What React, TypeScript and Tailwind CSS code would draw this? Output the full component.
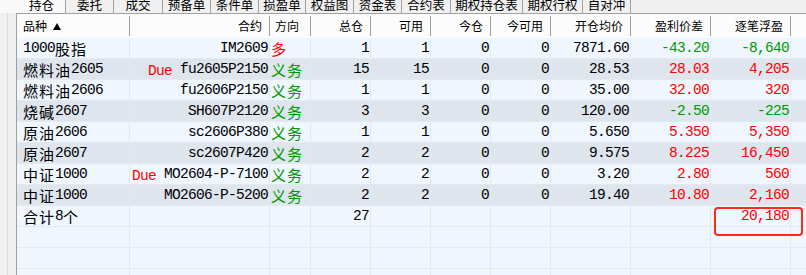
import React from "react";

const cjkRe = /([\u2E80-\u9FFF\uFF00-\uFFEF]+)/;

function T({ s }: { s: string }) {
  const parts = s.split(cjkRe).filter((p) => p.length > 0);
  return (
    <>
      {parts.map((p, i) =>
        cjkRe.test(p) ? (
          <span key={i} className="font-['Noto_Sans_CJK_SC',sans-serif] text-[15px] tracking-[1px]">
            {p}
          </span>
        ) : (
          <span key={i} className="font-['Liberation_Mono',monospace] text-[14.5px] tracking-[-0.7px] whitespace-pre">
            {p}
          </span>
        )
      )}
    </>
  );
}

const tabs: { label: string; w: string }[] = [
  { label: "持仓", w: "w-[66px] pl-[18px] bg-[#f9f9f9]" },
  { label: "委托", w: "w-[48px]" },
  { label: "成交", w: "w-[49px]" },
  { label: "预备单", w: "w-[48px]" },
  { label: "条件单", w: "w-[48px]" },
  { label: "损盈单", w: "w-[47px]" },
  { label: "权益图", w: "w-[48px]" },
  { label: "资金表", w: "w-[48px]" },
  { label: "合约表", w: "w-[49px]" },
  { label: "期权持仓表", w: "w-[72px]" },
  { label: "期权行权", w: "w-[60px]" },
  { label: "自对冲", w: "w-[48px]" },
];

const colW = [
  "w-[113px]",
  "w-[140px]",
  "w-[41px]",
  "w-[60px]",
  "w-[60px]",
  "w-[60px]",
  "w-[60px]",
  "w-[80px]",
  "w-[80px]",
  "w-[80px]",
];

const headers = ["品种", "合约", "方向", "总仓", "可用", "今仓", "今可用", "开仓均价", "盈利价差", "逐笔浮盈"];

type Row = {
  name: string;
  due?: boolean;
  code: string;
  dir: string;
  dirRed?: boolean;
  total: string;
  avail: string;
  today: string;
  todayAvail: string;
  price: string;
  diff: string;
  pnl: string;
  up: boolean;
};

const rows: Row[] = [
  { name: "1000股指", code: "IM2609", dir: "多", dirRed: true, total: "1", avail: "1", today: "0", todayAvail: "0", price: "7871.60", diff: "-43.20", pnl: "-8,640", up: false },
  { name: "燃料油2605", due: true, code: "fu2605P2150", dir: "义务", total: "15", avail: "15", today: "0", todayAvail: "0", price: "28.53", diff: "28.03", pnl: "4,205", up: true },
  { name: "燃料油2606", code: "fu2606P2150", dir: "义务", total: "1", avail: "1", today: "0", todayAvail: "0", price: "35.00", diff: "32.00", pnl: "320", up: true },
  { name: "烧碱2607", code: "SH607P2120", dir: "义务", total: "3", avail: "3", today: "0", todayAvail: "0", price: "120.00", diff: "-2.50", pnl: "-225", up: false },
  { name: "原油2606", code: "sc2606P380", dir: "义务", total: "1", avail: "1", today: "0", todayAvail: "0", price: "5.650", diff: "5.350", pnl: "5,350", up: true },
  { name: "原油2607", code: "sc2607P420", dir: "义务", total: "2", avail: "2", today: "0", todayAvail: "0", price: "9.575", diff: "8.225", pnl: "16,450", up: true },
  { name: "中证1000", due: true, code: "MO2604-P-7100", dir: "义务", total: "2", avail: "2", today: "0", todayAvail: "0", price: "3.20", diff: "2.80", pnl: "560", up: true },
  { name: "中证1000", code: "MO2606-P-5200", dir: "义务", total: "2", avail: "2", today: "0", todayAvail: "0", price: "19.40", diff: "10.80", pnl: "2,160", up: true },
];

const cellR = "flex items-center justify-end pr-[1px] pt-[2px] border-r border-[#e4e9ef] whitespace-pre";
const cellL = "flex items-center pt-[2px] border-r border-[#e4e9ef] whitespace-pre";

function DataRow({ r, dark }: { r: Row; dark: boolean }) {
  const bg = dark ? "bg-[#dee5ec]" : "bg-[#eff6fd]";
  const clr = r.up ? "text-[#ff0000]" : "text-[#009900]";
  return (
    <div className={`flex h-[21px] border-b border-[#e4e9ef] text-black ${bg}`}>
      <div className={`${colW[0]} ${cellL} pl-[6px]`}>
        <T s={r.name} />
      </div>
      <div className={`${colW[1]} ${cellR}`}>
        {r.due && (
          <span className="text-[#ff0000]">
            <T s="Due" />
          </span>
        )}
        <T s={(r.due ? " " : "") + r.code} />
      </div>
      <div className={`${colW[2]} ${cellL} pl-[1px] ${r.dirRed ? "text-[#ff0000]" : "text-[#009900]"}`}>
        <T s={r.dir} />
      </div>
      <div className={`${colW[3]} ${cellR}`}>
        <T s={r.total} />
      </div>
      <div className={`${colW[4]} ${cellR}`}>
        <T s={r.avail} />
      </div>
      <div className={`${colW[5]} ${cellR}`}>
        <T s={r.today} />
      </div>
      <div className={`${colW[6]} ${cellR}`}>
        <T s={r.todayAvail} />
      </div>
      <div className={`${colW[7]} ${cellR}`}>
        <T s={r.price} />
      </div>
      <div className={`${colW[8]} ${cellR} ${clr}`}>
        <T s={r.diff} />
      </div>
      <div className={`${colW[9]} ${cellR} ${clr}`}>
        <T s={r.pnl} />
      </div>
      <div className="flex-1" />
    </div>
  );
}

function EmptyRow({ children }: { children?: React.ReactNode }) {
  return <div className="flex h-[21px] border-b border-[#e4e9ef] bg-[#eff6fd]">{children}</div>;
}

export default function App() {
  return (
    <div className="relative w-[806px] h-[275px] overflow-hidden bg-[#f0f0f0] text-black">
      {/* tab bar */}
      <div className="flex h-[13px] font-['Noto_Sans_CJK_SC',sans-serif] text-[12.5px] leading-[12px]">
        {tabs.map((t) => (
          <div
            key={t.label}
            className={`${t.w} h-[13px] flex items-end justify-center pb-[2px] border-r border-[#a0a0a0]`}
          >
            <span>{t.label}</span>
          </div>
        ))}
      </div>

      <div className="flex">
        {/* gutter */}
        <div className="w-[16px] h-[262px] flex">
          <div className="w-[8px] border-r border-[#dadada]" />
        </div>

        {/* grid */}
        <div className="flex-1 border-l border-t border-[#a0a0a0] h-[262px] overflow-hidden">
          {/* header */}
          <div className="flex h-[24px] bg-[#fcfcfc] font-['Noto_Sans_CJK_SC',sans-serif] text-[12px] leading-[14px]">
            {headers.map((h, i) => (
              <div key={h} className={`${colW[i]} flex items-center`}>
                <div
                  className={`flex-1 flex items-center ${
                    i === 0 ? "pl-[6px]" : i === 2 ? "pl-[5px]" : "justify-end pr-[7px]"
                  }`}
                >
                  <span>{h}</span>
                  {i === 0 && (
                    <svg width="8" height="7" viewBox="0 0 8 7" className="ml-[6px]">
                      <path d="M4 0 L8 7 L0 7 Z" fill="#000" />
                    </svg>
                  )}
                </div>
                <div className="w-px h-[20px] bg-[#a0a0a0]" />
              </div>
            ))}
            <div className="flex-1" />
          </div>

          {rows.map((r, i) => (
            <DataRow key={i} r={r} dark={i % 2 === 1} />
          ))}

          <EmptyRow>
            <div className={`${colW[0]} ${cellL} pl-[6px]`}>
              <T s="合计8个" />
            </div>
            <div className={`${colW[1]} ${cellR}`} />
            <div className={`${colW[2]} ${cellR}`} />
            <div className={`${colW[3]} ${cellR}`}>
              <T s="27" />
            </div>
            <div className={`${colW[4]} ${cellR}`} />
            <div className={`${colW[5]} ${cellR}`} />
            <div className={`${colW[6]} ${cellR}`} />
            <div className={`${colW[7]} ${cellR}`} />
            <div className={`${colW[8]} ${cellR}`} />
            <div className={`${colW[9]} ${cellR} text-[#ff0000]`}>
              <T s="20,180" />
            </div>
            <div className="flex-1" />
          </EmptyRow>
          {[0, 1, 2].map((k) => (
            <EmptyRow key={k}>
              {colW.map((w, j) => (
                <div key={j} className={`${w} border-r border-[#e4e9ef]`} />
              ))}
              <div className="flex-1" />
            </EmptyRow>
          ))}
        </div>
      </div>

      {/* annotation box */}
      <div className="absolute left-[714px] top-[207px] w-[89px] h-[29px] border-2 border-[#ff2a1a] rounded-[4px]" />
    </div>
  );
}
